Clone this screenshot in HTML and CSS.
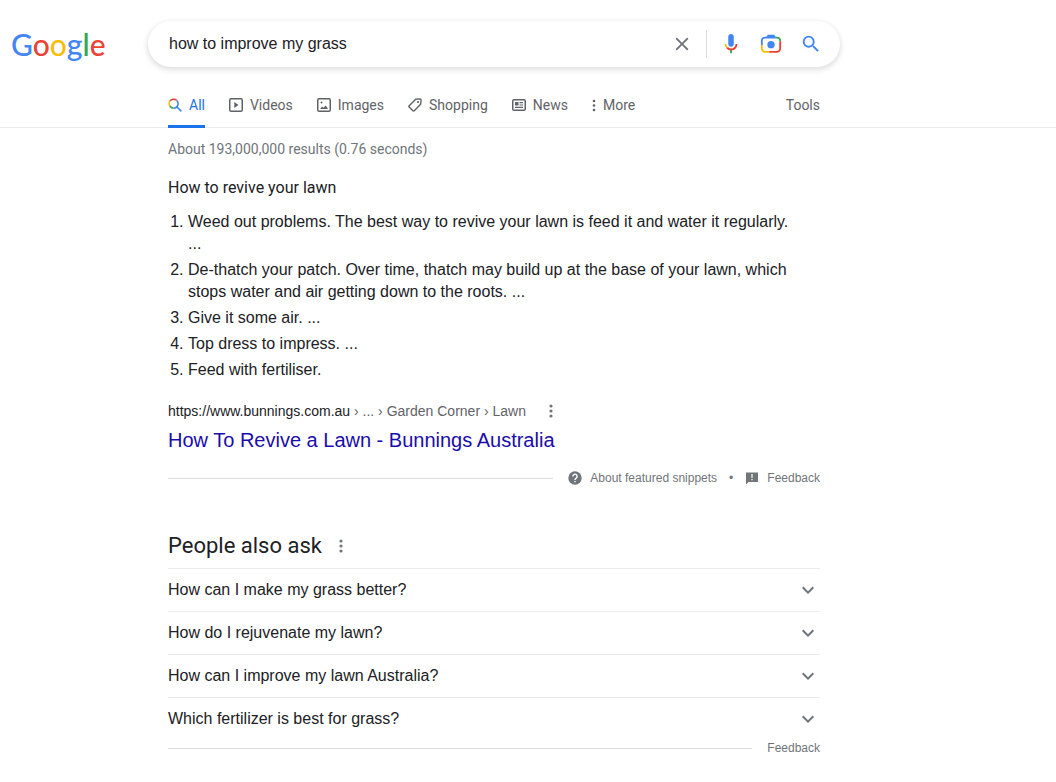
FILE: index.html
```html
<!DOCTYPE html>
<html lang="en">
<head>
<meta charset="utf-8">
<meta name="viewport" content="width=device-width, initial-scale=1">
<title>how to improve my grass - Google Search</title>
<link rel="stylesheet" href="styles.css">
</head>
<body>

<header class="header">
	<div class="topbar">
		<a class="logo" href="#" aria-label="Google"><span class="blue">G</span><span class="red">o</span><span class="yellow">o</span><span class="blue">g</span><span class="green">l</span><span class="red">e</span></a>
		<form class="search" role="search">
			<input class="search-input" type="text" name="q" value="how to improve my grass" aria-label="Search">
			<button class="search-btn" type="reset" aria-label="Clear">
				<svg width="24" height="24" viewBox="0 0 24 24"><path fill="#70757a" d="M19 6.41 17.59 5 12 10.59 6.41 5 5 6.41 10.59 12 5 17.59 6.41 19 12 13.41 17.59 19 19 17.59 13.41 12z"/></svg>
			</button>
			<span class="search-divider"></span>
			<button class="search-btn" type="button" aria-label="Search by voice">
				<svg width="24" height="24" viewBox="0 0 24 24">
					<path fill="#4285f4" d="M12 15c1.660 0 3-1.340 3-3V4c0-1.660-1.340-3-3-3S9 2.340 9 4v8c0 1.660 1.340 3 3 3z"/>
					<path fill="#34a853" d="M11 18.080h2V22h-2z"/>
					<path fill="#fbbc05" d="M7.050 16.870A6.900 6.900 0 0 1 5 12h2c0 1.500.560 2.420 1.470 3.380v.020z"/>
					<path fill="#ea4335" d="M12 16.930a4.970 4.970 0 0 1-3.540-1.550l-1.410 1.490C8.310 18.140 9.990 19 12 19c4.020 0 6.990-2.870 6.990-7h-1.990c0 2.920-2.240 4.930-5 4.930z"/>
				</svg>
			</button>
			<button class="search-btn" type="button" aria-label="Search by image">
				<svg width="24" height="24" viewBox="0 0 24 24" fill="none" stroke-width="2">
					<path stroke="#4285f4" d="M2 13V8.500A3.500 3.500 0 0 1 5.500 5H17"/>
					<path fill="#4285f4" d="M6.500 5l2-3h7l2 3z"/>
					<path stroke="#34a853" d="M17 5h1.500A3.500 3.500 0 0 1 22 9"/>
					<path stroke="#ea4335" d="M22 9v8a3.500 3.500 0 0 1-3.500 3.500H10"/>
					<path stroke="#fbbc05" d="M10 20.500H5.500A3.500 3.500 0 0 1 2 17V13"/>
					<circle cx="12" cy="12.700" r="4" fill="#4285f4"/>
				</svg>
			</button>
			<button class="search-btn" type="submit" aria-label="Google Search">
				<svg width="24" height="24" viewBox="0 0 24 24"><path fill="#4285f4" d="M15.500 14h-.790l-.280-.270A6.470 6.470 0 0 0 16 9.500 6.500 6.500 0 1 0 9.500 16c1.610 0 3.090-.590 4.230-1.570l.270.280v.790l5 4.990L20.490 19zm-6 0C7.010 14 5 11.990 5 9.500S7.010 5 9.500 5 14 7.010 14 9.500 11.990 14 9.500 14z"/></svg>
			</button>
		</form>
	</div>

	<nav class="tabs">
		<a class="tab active" href="#">
			<svg width="14" height="14" viewBox="0 0 14 14" fill="none" stroke-width="1.500">
				<path stroke="#ea4335" d="M1.800 3.200A4.600 4.600 0 0 1 8.800 2.400"/>
				<path stroke="#fbbc05" d="M1.800 8A4.600 4.600 0 0 1 1.800 3.200"/>
				<path stroke="#34a853" d="M5.600 10.200A4.600 4.600 0 0 1 1.800 8"/>
				<path stroke="#4285f4" d="M8.800 2.400A4.600 4.600 0 0 1 5.600 10.200M8.900 8.900l4.500 4.500"/>
			</svg>All</a>
		<a class="tab" href="#">
			<svg width="14" height="14" viewBox="0 0 14 14"><rect x=".750" y=".750" width="12.500" height="12.500" rx="1.300" fill="none" stroke="currentColor" stroke-width="1.500"/><path fill="currentColor" d="M5.300 4v6l4.200-3z"/></svg>Videos</a>
		<a class="tab" href="#">
			<svg width="14" height="14" viewBox="0 0 14 14"><rect x=".750" y=".750" width="12.500" height="12.500" rx="1.300" fill="none" stroke="currentColor" stroke-width="1.500"/><path fill="currentColor" d="M3 11l2-2.500 1.500 1.300L8.800 7.500 11 11z"/><circle cx="4.500" cy="4.500" r="1" fill="currentColor"/></svg>Images</a>
		<a class="tab" href="#">
			<svg width="14" height="14" viewBox="0 0 14 14"><path fill="none" stroke="currentColor" stroke-width="1.400" stroke-linejoin="round" d="M7.700 1.300L12 .900q1.100 0 1.100 1.100l-.500 4.300-6.300 6.500q-.700.600-1.400 0L1.200 9.100q-.700-.700 0-1.400z"/><circle cx="10" cy="4" r="1.100" fill="currentColor"/></svg>Shopping</a>
		<a class="tab" href="#">
			<svg width="14" height="14" viewBox="0 0 14 14"><rect x=".750" y="1.750" width="12.500" height="10.500" rx="1.300" fill="none" stroke="currentColor" stroke-width="1.500"/><path fill="currentColor" d="M3 4h3.500v3.500H3zM7.500 4H11v1.200H7.500zM7.500 6.400H11v1.200H7.500zM3 8.800h8V10H3z"/></svg>News</a>
		<a class="tab" href="#">
			<svg width="4" height="14" viewBox="0 0 4 14" fill="currentColor"><circle cx="2" cy="3" r="1.300"/><circle cx="2" cy="7.500" r="1.300"/><circle cx="2" cy="12" r="1.300"/></svg>More</a>
		<a class="tab tools" href="#">Tools</a>
	</nav>
</header>

<main class="results">
	<p class="stats">About 193,000,000 results (0.76 seconds)</p>

	<section class="snippet">
		<h2 class="snippet-heading">How to revive your lawn</h2>
		<ol class="steps">
			<li>Weed out problems. The best way to revive your lawn is feed it and water it regularly. ...</li>
			<li>De-thatch your patch. Over time, thatch may build up at the base of your lawn, which stops water and air getting down to the roots. ...</li>
			<li>Give it some air. ...</li>
			<li>Top dress to impress. ...</li>
			<li>Feed with fertiliser.</li>
		</ol>
		<div class="source">
			<cite class="url">https://www.bunnings.com.au<span class="crumbs"> › ... › Garden Corner › Lawn</span></cite>
			<button class="dots" type="button" aria-label="About this result">
				<svg width="4" height="14" viewBox="0 0 4 14" fill="#70757a"><circle cx="2" cy="2" r="1.600"/><circle cx="2" cy="7" r="1.600"/><circle cx="2" cy="12" r="1.600"/></svg>
			</button>
		</div>
		<h3 class="result-title"><a href="#">How To Revive a Lawn - Bunnings Australia</a></h3>
		<div class="footnote">
			<span class="rule"></span>
			<a href="#">
				<svg width="14" height="14" viewBox="0 0 14 14"><circle cx="7" cy="7" r="6.700" fill="#70757a"/><path fill="none" stroke="#fff" stroke-width="1.400" d="M4.900 5.500A2.100 2.100 0 1 1 8.200 7.100Q7 7.900 7 8.900"/><path fill="#fff" d="M6.300 9.900h1.400v1.400H6.300z"/></svg>
				About featured snippets</a>
			<span class="bullet">•</span>
			<a href="#">
				<svg width="14" height="14" viewBox="0 0 14 14"><path fill="#70757a" d="M1 1.500h12v9.500H3.500L1 13.500z"/><path fill="#fff" d="M6.400 3h1.200v4H6.400zM6.400 8h1.200v1.200H6.400z"/></svg>
				Feedback</a>
		</div>
	</section>

	<section class="related">
		<div class="related-head">
			<h2>People also ask</h2>
			<button class="dots" type="button" aria-label="About this section">
				<svg width="4" height="14" viewBox="0 0 4 14" fill="#70757a"><circle cx="2" cy="2" r="1.600"/><circle cx="2" cy="7" r="1.600"/><circle cx="2" cy="12" r="1.600"/></svg>
			</button>
		</div>
		<button class="question" type="button" aria-expanded="false">How can I make my grass better?
			<svg width="24" height="24" viewBox="0 0 24 24"><path fill="#70757a" d="M16.590 8.590 12 13.170 7.410 8.590 6 10l6 6 6-6z"/></svg></button>
		<button class="question" type="button" aria-expanded="false">How do I rejuvenate my lawn?
			<svg width="24" height="24" viewBox="0 0 24 24"><path fill="#70757a" d="M16.590 8.590 12 13.170 7.410 8.590 6 10l6 6 6-6z"/></svg></button>
		<button class="question" type="button" aria-expanded="false">How can I improve my lawn Australia?
			<svg width="24" height="24" viewBox="0 0 24 24"><path fill="#70757a" d="M16.590 8.590 12 13.170 7.410 8.590 6 10l6 6 6-6z"/></svg></button>
		<button class="question" type="button" aria-expanded="false">Which fertilizer is best for grass?
			<svg width="24" height="24" viewBox="0 0 24 24"><path fill="#70757a" d="M16.590 8.590 12 13.170 7.410 8.590 6 10l6 6 6-6z"/></svg></button>
		<div class="footnote">
			<span class="rule"></span>
			<a href="#">Feedback</a>
		</div>
	</section>
</main>

</body>
</html>
```

FILE: styles.css
```css
:root {
	--text: #202124;
	--grey: #70757a;
	--tab: #5f6368;
	--line: #ebebeb;
	--rule: #dadce0;
	--link: #1a0dab;
	--display: Roboto, "Liberation Sans", sans-serif;
}
* {
	box-sizing: border-box;
}
body {
	margin: 0;
	background: #fff;
	color: var(--text);
	font-family: "Liberation Sans", Arial, sans-serif;
	font-size: 16px;
}
a {
	color: inherit;
	text-decoration: none;
}
button {
	padding: 0;
	border: 0;
	background: none;
	color: inherit;
	font: inherit;
	cursor: pointer;
}
h2, h3, p, ol {
	margin: 0;
	font-weight: 400;
}
svg {
	display: block;
	flex: none;
}

/* header */
.header {
	padding-top: 21px;
	border-bottom: 1px solid var(--line);
}
.topbar {
	display: flex;
	align-items: center;
}
.logo {
	flex: none;
	width: 148px;
	padding-left: 11px;
	font-family: Lato, sans-serif;
	font-size: 30px;
	font-weight: 500;
	line-height: 40px;
}
.blue { color: #4285f4; }
.red { color: #ea4335; }
.yellow { color: #fbbc05; }
.green { color: #34a853; }

.search {
	display: flex;
	align-items: center;
	flex: 0 1 692px;
	min-width: 0;
	height: 46px;
	padding: 0 9px 0 21px;
	border-radius: 24px;
	background: #fff;
	box-shadow: 0 2px 5px 1px rgba(64, 60, 67, .16);
}
.search-input {
	flex: 1;
	min-width: 0;
	padding: 0;
	border: 0;
	outline: 0;
	background: none;
	color: var(--text);
	font: inherit;
}
.search-btn {
	display: flex;
	align-items: center;
	justify-content: center;
	flex: none;
	width: 40px;
	height: 44px;
}
.search-btn svg {
	width: 22px;
	height: 22px;
}
.search-divider {
	width: 1px;
	height: 28px;
	margin: 0 4px;
	background: var(--rule);
}

.tabs {
	display: flex;
	gap: 24px;
	max-width: 820px;
	height: 44px;
	margin: 17px 0 -1px;
	padding-left: 168px;
	color: var(--tab);
	font-family: var(--display);
	font-size: 14px;
}
.tab {
	display: flex;
	align-items: center;
	gap: 7px;
	height: 44px;
	border-bottom: 3px solid transparent;
}
.tab.active {
	border-color: #1a73e8;
	color: #1a73e8;
}
.tools {
	margin-left: auto;
}

/* results */
.results {
	max-width: 820px;
	padding: 11px 0 24px 168px;
}
.stats {
	color: var(--grey);
	font-family: var(--display);
	font-size: 14px;
	line-height: 20px;
}
.snippet-heading {
	margin-top: 17px;
	font-family: var(--display);
	font-size: 16px;
	line-height: 24px;
}
.steps {
	margin-top: 11px;
	padding: 0 20px;
	line-height: 22px;
}
.steps li {
	padding-bottom: 4px;
}
.source {
	display: flex;
	align-items: center;
	gap: 23px;
	margin-top: 16px;
	font-size: 14px;
	line-height: 20px;
}
.url {
	font-style: normal;
}
.crumbs {
	color: var(--tab);
}
.result-title {
	margin-top: 6px;
	color: var(--link);
	font-size: 20px;
	line-height: 26px;
}
.footnote {
	display: flex;
	align-items: center;
	color: var(--grey);
	font-size: 12px;
	line-height: 16px;
}
.footnote a {
	display: flex;
	align-items: center;
	gap: 8px;
}
.rule {
	flex: 1;
	height: 1px;
	margin-right: 15px;
	background: var(--rule);
}
.bullet {
	margin: 0 12px;
}
.snippet .footnote {
	margin-top: 17px;
}

/* people also ask */
.related {
	margin-top: 46px;
}
.related-head {
	display: flex;
	align-items: center;
	gap: 17px;
	margin-bottom: 8px;
}
.related-head h2 {
	font-family: var(--display);
	font-size: 22px;
	line-height: 28px;
}
.question {
	display: flex;
	align-items: center;
	justify-content: space-between;
	width: 100%;
	height: 43px;
	border-top: 1px solid var(--line);
	text-align: left;
}
```
